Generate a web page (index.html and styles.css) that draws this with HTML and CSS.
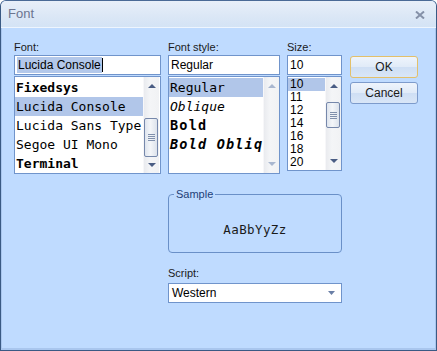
FILE: index.html
```html
<!DOCTYPE html>
<html>
<head>
<meta charset="utf-8">
<link rel="stylesheet" href="styles.css">
</head>
<body>
<div class="window">
  <div class="titlebar">
    <span class="title">Font</span>
    <svg class="close" width="10" height="8" viewBox="0 0 10 8"><path d="M1 0.5 L9 7.5 M9 0.5 L1 7.5" stroke="#8591a8" stroke-width="2" fill="none"/></svg>
  </div>
  <div class="content">
    <div class="top">
      <div class="col col-font">
        <div class="label">Font:</div>
        <div class="input"><span class="sel">Lucida Console</span><span class="caret"></span></div>
        <div class="list list-font">
          <div class="items mono">
            <div class="item bold">Fixedsys</div>
            <div class="item selected">Lucida Console</div>
            <div class="item">Lucida Sans Type</div>
            <div class="item">Segoe UI Mono</div>
            <div class="item bold">Terminal</div>
          </div>
          <div class="scrollbar">
            <div class="arrow up"></div>
            <div class="track"><div class="thumb thumb-font"><i></i><i></i><i></i><i></i></div></div>
            <div class="arrow down"></div>
          </div>
        </div>
      </div>
      <div class="col col-style">
        <div class="label">Font style:</div>
        <div class="input"><span>Regular</span></div>
        <div class="list list-style">
          <div class="items mono">
            <div class="item selected">Regular</div>
            <div class="item italic">Oblique</div>
            <div class="item bold wide">Bold</div>
            <div class="item bold italic wide">Bold Oblique</div>
          </div>
          <div class="scrollbar disabled">
            <div class="arrow up"></div>
            <div class="track"></div>
            <div class="arrow down"></div>
          </div>
        </div>
      </div>
      <div class="col col-size">
        <div class="label">Size:</div>
        <div class="input"><span>10</span></div>
        <div class="list list-size">
          <div class="items sizes">
            <div class="item selected">10</div>
            <div class="item">11</div>
            <div class="item">12</div>
            <div class="item">14</div>
            <div class="item">16</div>
            <div class="item">18</div>
            <div class="item">20</div>
          </div>
          <div class="scrollbar">
            <div class="arrow up"></div>
            <div class="track"><div class="thumb thumb-size"><i></i><i></i><i></i><i></i></div></div>
            <div class="arrow down"></div>
          </div>
        </div>
      </div>
      <div class="col col-buttons">
        <button class="btn default">OK</button>
        <button class="btn">Cancel</button>
      </div>
    </div>
    <div class="lower">
      <fieldset class="sample">
        <legend>Sample</legend>
        <div class="sample-text">AaBbYyZz</div>
      </fieldset>
      <div class="label script-label">Script:</div>
      <div class="combo">
        <span>Western</span>
        <svg class="combo-arrow" width="7" height="4" viewBox="0 0 7 4"><path d="M0 0 H7 L3.5 4 Z" fill="#6a7fa6"/></svg>
      </div>
    </div>
  </div>
</div>
</body>
</html>
```

FILE: styles.css
```css
* { box-sizing: border-box; }
html, body { margin: 0; padding: 0; }
body { background: #ffffff; font-family: "Liberation Sans", Arial, sans-serif; }

.window {
  width: 437px;
  height: 351px;
  border: 1px solid #3a5a84;
  border-top-color: #4a6a96;
  border-radius: 6px 6px 0 0;
  background: #bfdbff;
  overflow: hidden;
  display: flex;
  flex-direction: column;
}

.titlebar {
  height: 27px;
  flex: none;
  display: flex;
  align-items: center;
  justify-content: space-between;
  padding: 0 11px 1px 7px;
  background: linear-gradient(#e8eff9, #dbe7f6 60%, #d4e3f5);
  border-bottom: 1px solid #eef5fe;
}
.title { font-size: 13px; color: #6b7590; }
.close { margin-top: 2px; }

.content {
  flex: 1;
  padding: 13px 0 0 12px;
  border-left: 1px solid #a9c6ee;
  border-right: 1px solid #a9c6ee;
  border-bottom: 2px solid #a9c6ee;
}

.label { font-size: 11px; color: #1a1a1a; height: 14px; line-height: 13px; }

.top { display: flex; }
.col { display: flex; flex-direction: column; }
.col-font { width: 147px; }
.col-style { width: 112px; margin-left: 7px; }
.col-size { width: 55px; margin-left: 7px; }
.col-buttons { width: 68px; margin-left: 8px; padding-top: 15px; gap: 4px; }

.input {
  height: 20px;
  border: 1px solid #7094cb;
  background: #fff;
  font-size: 12px;
  line-height: 17px;
  padding-left: 2px;
  color: #000;
  display: flex;
  align-items: center;
  white-space: nowrap;
}
.input .sel { background: #b3c8ea; padding: 0 1px 0 1px; line-height: 16px; }
.caret { display: inline-block; width: 1px; height: 14px; background: #000; }

.list {
  margin-top: 1px;
  border: 1px solid #7094cb;
  background: #fff;
  display: flex;
  overflow: hidden;
}
.list-font, .list-style { height: 98px; }
.list-size { height: 95px; }

.items { flex: 1; min-width: 0; padding-top: 1px; overflow: hidden; }
.item { white-space: nowrap; overflow: hidden; color: #000; padding-left: 1px; }
.mono .item {
  font-family: "DejaVu Sans Mono", "Liberation Mono", monospace;
  font-size: 13px;
  height: 19px;
  line-height: 19px;
}
.mono .item.wide { letter-spacing: 1.2px; font-size: 13.5px; }
.sizes .item { font-size: 12px; height: 13px; line-height: 13px; padding-left: 2px; }
.item.selected { background: #b1c6e9; }
.bold { font-weight: bold; }
.italic { font-style: italic; }

.scrollbar {
  width: 16px;
  flex: none;
  display: flex;
  flex-direction: column;
  background: linear-gradient(90deg, #e9ebef, #f4f5f7 40%, #f1f2f4);
  border-left: 1px solid #f7f7f9;
}
.list-font .scrollbar { margin-right: 1px; }
.arrow { height: 17px; flex: none; position: relative; }
.arrow::after {
  content: "";
  position: absolute;
  left: 4px;
  width: 0; height: 0;
  border-left: 4px solid transparent;
  border-right: 4px solid transparent;
}
.arrow.up::after { top: 7px; border-bottom: 4px solid #4a5d84; }
.arrow.down::after { top: 6px; border-top: 4px solid #4a5d84; }
.disabled .arrow.up::after { border-bottom-color: #a9b7d0; }
.disabled .arrow.down::after { border-top-color: #a9b7d0; }
.track { flex: 1; }
.thumb {
  margin: 0 1px 0 0;
  border: 1px solid #7688ab;
  border-radius: 2px;
  background: linear-gradient(90deg, #dfe5ee, #f4f6f9 45%, #dde3ec);
  display: flex;
  flex-direction: column;
  align-items: center;
  justify-content: center;
  gap: 1px;
}
.thumb i { display: block; width: 7px; height: 1px; background: #8090ac; }
.thumb-font { margin-top: 24px; height: 39px; }
.thumb-size { margin-top: 8px; height: 26px; }

.btn {
  height: 22px;
  width: 68px;
  padding: 0;
  font-family: "Liberation Sans", Arial, sans-serif;
  font-size: 12px;
  color: #1a1a1a;
  border: 1px solid #7d9bcb;
  border-radius: 3px;
  background: linear-gradient(#eef4fc 0%, #e1ebf8 48%, #cfdff4 52%, #d9e6f7 100%);
}
.btn.default { border-color: #e3c06a; }

.lower { margin-left: 154px; width: 174px; padding-top: 15px; }

.sample {
  margin: 0;
  padding: 0;
  height: 64px;
  border: 1px solid #6a90c8;
  border-radius: 4px;
  min-width: 0;
}
.sample legend {
  margin-left: 5px;
  padding: 0 2px;
  font-size: 11px;
  color: #1e3f78;
  line-height: 11px;
}
.sample-text {
  text-align: center;
  font-family: "DejaVu Sans Mono", "Liberation Mono", monospace;
  font-size: 12.5px;
  color: #1a1a1a;
  padding-top: 22px;
  letter-spacing: 0.4px;
}

.script-label { margin-top: 14px; height: 15px; }
.combo {
  margin-top: 1px;
  height: 20px;
  border: 1px solid #7094cb;
  background: #fff;
  font-size: 12px;
  display: flex;
  align-items: center;
  justify-content: space-between;
  padding: 0 6px 0 3px;
}
```
